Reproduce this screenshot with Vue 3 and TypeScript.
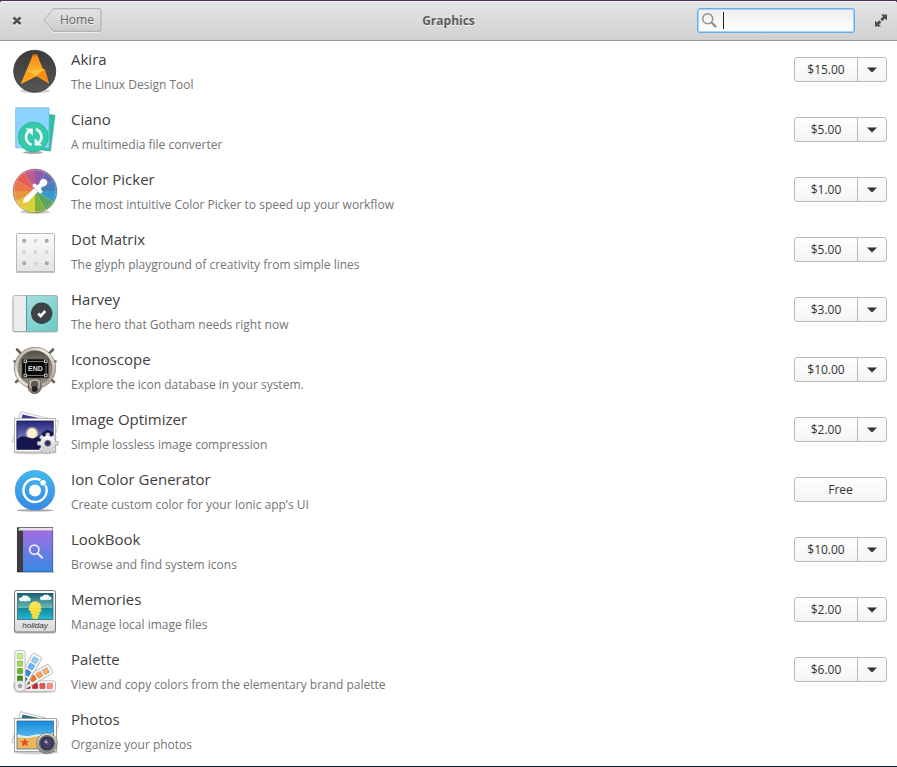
<script setup lang="ts">
import { ref } from 'vue'

interface AppEntry {
  id: string
  name: string
  summary: string
  price?: string
}

interface Swatch {
  angle: number
  colors: string[]
}

const query = ref('')

const apps: AppEntry[] = [
  { id: 'akira', name: 'Akira', summary: 'The Linux Design Tool', price: '$15.00' },
  { id: 'ciano', name: 'Ciano', summary: 'A multimedia file converter', price: '$5.00' },
  { id: 'picker', name: 'Color Picker', summary: 'The most intuitive Color Picker to speed up your workflow', price: '$1.00' },
  { id: 'dots', name: 'Dot Matrix', summary: 'The glyph playground of creativity from simple lines', price: '$5.00' },
  { id: 'harvey', name: 'Harvey', summary: 'The hero that Gotham needs right now', price: '$3.00' },
  { id: 'iconoscope', name: 'Iconoscope', summary: 'Explore the icon database in your system.', price: '$10.00' },
  { id: 'optimizer', name: 'Image Optimizer', summary: 'Simple lossless image compression', price: '$2.00' },
  { id: 'ion', name: 'Ion Color Generator', summary: 'Create custom color for your Ionic app’s UI', price: 'Free' },
  { id: 'lookbook', name: 'LookBook', summary: 'Browse and find system icons', price: '$10.00' },
  { id: 'memories', name: 'Memories', summary: 'Manage local image files', price: '$2.00' },
  { id: 'palette', name: 'Palette', summary: 'View and copy colors from the elementary brand palette', price: '$6.00' },
  { id: 'photos', name: 'Photos', summary: 'Organize your photos' },
]

const wheelColors = [
  '#8d5cab', '#6568ae', '#4a7fbd', '#3899cd', '#57a562', '#7fb03f',
  '#d2d334', '#e6c93a', '#e8963f', '#e87848', '#e65c50', '#bd5b8c',
]

// Pie slice of the colour wheel, clockwise from twelve o'clock.
function slice(index: number): string {
  const point = (n: number): string => {
    const a = (n * Math.PI) / 6
    return `${(24 + 22 * Math.sin(a)).toFixed(2)} ${(24 - 22 * Math.cos(a)).toFixed(2)}`
  }
  return `M24 24L${point(index)}A22 22 0 0 1 ${point(index + 1)}Z`
}

const fans: Swatch[] = [
  { angle: 90, colors: ['#ff8c82', '#ed5353', '#c6262e', '#a10705'] },
  { angle: 60, colors: ['#ffb06e', '#ffa154', '#f37329', '#cc3b02'] },
  { angle: 30, colors: ['#8cd5ff', '#64baff', '#3689e6', '#0d52bf'] },
  { angle: 0, colors: ['#c5f57b', '#9bdb4d', '#68b723', '#3a9104'] },
]
</script>

<template>
  <div class="window">
    <header class="header">
      <div class="header-start">
        <button class="icon-button" type="button" aria-label="Close">
          <svg width="18" height="16" viewBox="0 0 18 16">
            <path d="M5.500 5l7 6.500M12.500 5l-7 6.500" stroke="#fff" stroke-opacity=".6" stroke-width="2.400" transform="translate(0 1)" />
            <path d="M5.500 4.500l7 6.500M12.500 4.500l-7 6.500" stroke="#4f4f4f" stroke-width="2.400" />
          </svg>
        </button>
        <button class="back" type="button">
          <svg class="back-shape" viewBox="0 0 60 25" aria-hidden="true">
            <defs>
              <linearGradient id="back-fill" x2="0" y2="1">
                <stop stop-color="#e4e4e4" /><stop offset="1" stop-color="#cbcbcb" />
              </linearGradient>
            </defs>
            <path d="M10 1.500L1 12.500L10 24.500H57" fill="none" stroke="#f1f1f1" />
            <path d="M10.500 .5H57a2 2 0 0 1 2 2V21.500a2 2 0 0 1-2 2H10.500L1 12.200z" fill="url(#back-fill)" stroke="#a8a8a8" />
          </svg>
          <span class="back-label">Home</span>
        </button>
      </div>
      <h1 class="heading">Graphics</h1>
      <div class="header-end">
        <label class="search">
          <svg width="16" height="16" viewBox="0 0 16 16" fill="none" stroke="#8f8f8f" aria-hidden="true">
            <circle cx="5.700" cy="5.700" r="5" stroke-width="1.400" />
            <path d="M9.500 9.500l4.600 4.600" stroke-width="2.200" />
          </svg>
          <span v-if="!query" class="caret"></span>
          <input v-model="query" type="text" aria-label="Search" :class="{ blank: !query }" />
        </label>
        <button class="icon-button" type="button" aria-label="Maximize">
          <svg width="16" height="16" viewBox="0 0 16 16" fill="#4f4f4f">
            <path d="M8 1.500h6v6l-2-2-2.700 2.700-2-2L10 3.500zM2 7.500l2 2 2.300-2.300 2 2L6 11.500l2 2H2z" />
          </svg>
        </button>
      </div>
    </header>

    <main>
      <ul class="list">
        <li v-for="app in apps" :key="app.id" class="row">
          <svg class="icon" viewBox="0 0 48 48" aria-hidden="true">
            <g v-if="app.id === 'akira'">
              <defs>
                <linearGradient id="ak-bg" x2="0" y2="1"><stop stop-color="#3b3b3b" /><stop offset="1" stop-color="#565656" /></linearGradient>
                <linearGradient id="ak-a" x2="0" y2="1"><stop stop-color="#f48a12" /><stop offset=".7" stop-color="#ffb92e" /><stop offset="1" stop-color="#ef8410" /></linearGradient>
              </defs>
              <ellipse cx="24" cy="44" rx="15" ry="2" fill="#000" opacity=".18" />
              <circle cx="23.700" cy="24.200" r="21" fill="url(#ak-bg)" stroke="#333" stroke-width=".8" />
              <path d="M22 7.500h4L38 36.500L25.500 29L10 36.800z" fill="url(#ak-a)" />
              <path d="M16 23.500L34 22L25.500 29L10 36.800z" fill="#ffc53a" />
              <path d="M16 23.500L25.500 29L10 36.800z" fill="#ff9f1d" />
              <path d="M29 25.500L34 22L38 36.500L25.500 29z" fill="#f78c12" />
              <path d="M22 7.500h4l-2 2.500z" fill="#c8650a" />
            </g>

            <g v-else-if="app.id === 'ciano'">
              <ellipse cx="22" cy="45.500" rx="10" ry="1.500" fill="#000" opacity=".35" />
              <path d="M34 7l10 1.200L39.500 44L14 41z" fill="#31bfa0" stroke="#2aa78c" stroke-width=".6" />
              <path d="M4.700.8H38v40H4.700z" fill="#8cd3ff" stroke="#70bdf0" stroke-width=".8" />
              <circle cx="22.300" cy="30" r="15" fill="#35c8a9" stroke="#2bb596" stroke-width=".8" />
              <g fill="none" stroke="#f4fffc" stroke-width="2.600">
                <path d="M20.500 38Q15.200 35.500 15 30Q15 26.500 18 24" />
                <path d="M25 22Q30.300 24.500 30.500 30Q30.500 33.500 27.500 36" />
              </g>
              <path d="M14.500 21.500h7.300v7.300zM31 38.500h-7.300v-7.300z" fill="#f4fffc" />
            </g>

            <g v-else-if="app.id === 'picker'">
              <ellipse cx="24" cy="45" rx="15" ry="1.800" fill="#000" opacity=".2" />
              <path v-for="(color, i) in wheelColors" :key="i" :d="slice(i)" :fill="color" />
              <circle cx="24" cy="24" r="21.900" fill="none" stroke="#5a4030" stroke-opacity=".4" />
              <circle cx="24" cy="24" r="20.900" fill="none" stroke="#fff" stroke-opacity=".25" />
              <g fill="#fff" transform="translate(12.300 35.700) rotate(45)">
                <path d="M-.5 0L-2.600-4V-18H2.600V-4L.5 0z" />
                <rect x="-6.200" y="-22" width="12.400" height="3.800" rx="1.900" />
                <path d="M-3.300-20L-2-24.500Q-4-27-3.600-29.500a3.700 3.700 0 0 1 7.200 0Q4-27 2-24.500L3.300-20z" />
              </g>
            </g>

            <g v-else-if="app.id === 'dots'">
              <defs><linearGradient id="dm" x2="0" y2="1"><stop stop-color="#fafafa" /><stop offset="1" stop-color="#e4e4e4" /></linearGradient></defs>
              <rect x="5" y="8" width="39" height="38" rx="1.500" fill="#000" opacity=".25" />
              <rect x="5.500" y="6.500" width="38" height="38" rx="1" fill="url(#dm)" stroke="#b8b8b8" />
              <g fill="#d3d3d3"><circle cx="24.500" cy="13.700" r="1.900" /><circle cx="13.200" cy="25" r="1.900" /><circle cx="24.500" cy="25" r="1.900" /><circle cx="35.700" cy="25" r="1.900" /><circle cx="24.500" cy="36.300" r="1.900" /></g>
              <g fill="#a6a6a6"><circle cx="13.200" cy="13.700" r="2" /><circle cx="35.700" cy="13.700" r="2" /><circle cx="13.200" cy="36.300" r="2" /><circle cx="35.700" cy="36.300" r="2" /></g>
            </g>

            <g v-else-if="app.id === 'harvey'">
              <defs><linearGradient id="hv" x2=".6" y2="1"><stop stop-color="#a6dedd" /><stop offset="1" stop-color="#72cdca" /></linearGradient></defs>
              <rect x="1.500" y="10" width="45.500" height="35.500" rx="2" fill="#000" opacity=".25" />
              <rect x="2" y="8.500" width="44.500" height="36" rx="1.500" fill="#ececec" />
              <path d="M15.300 8.500H45a1.500 1.500 0 0 1 1.500 1.500V43a1.500 1.500 0 0 1-1.500 1.500H15.300z" fill="url(#hv)" />
              <path d="M15.500 8.500v36" stroke="#3ba5a0" />
              <rect x="2" y="8.500" width="44.500" height="36" rx="1.500" fill="none" stroke="#8a9696" stroke-opacity=".6" />
              <circle cx="30.700" cy="26.300" r="10.700" fill="#3b4344" />
              <path d="M27.200 26.500l2.500 2.500 4.600-5" fill="none" stroke="#fff" stroke-width="2.600" />
            </g>

            <g v-else-if="app.id === 'iconoscope'">
              <defs>
                <linearGradient id="ic" x2="0" y2="1"><stop stop-color="#4b4641" /><stop offset=".45" stop-color="#8d877f" /><stop offset="1" stop-color="#8a847b" /></linearGradient>
                <linearGradient id="ic-rim" x2="1" y2="1"><stop stop-color="#9a948b" /><stop offset=".35" stop-color="#f1ede6" /><stop offset=".7" stop-color="#d5cfc5" /><stop offset="1" stop-color="#8a847c" /></linearGradient>
              </defs>
              <g stroke="#6b6157" stroke-width="2.600" stroke-linecap="round">
                <path d="M6 2.500l5 5M42 2.500l-5 5M3.500 14.500h4M44.500 14.500h-4M5 35l4-3.500M43 35l-4-3.500" />
              </g>
              <circle cx="24" cy="21" r="19" fill="url(#ic)" stroke="url(#ic-rim)" stroke-width="3" />
              <circle cx="24" cy="21" r="20.700" fill="none" stroke="#7a7168" stroke-width=".7" />
              <rect x="11" y="12" width="26.500" height="19" rx="1" fill="#080808" stroke="#55504a" stroke-width=".8" />
              <path d="M14 14.500h21.500M14 28.500h21.500M14.500 14v15M35 14v15" stroke="#999" stroke-width=".8" />
              <g fill="#111" stroke="#ddd" stroke-width=".8"><rect x="13" y="13" width="2.600" height="2.600" /><rect x="33.500" y="13" width="2.600" height="2.600" /><rect x="13" y="27.200" width="2.600" height="2.600" /><rect x="33.500" y="27.200" width="2.600" height="2.600" /></g>
              <text class="mark-end" x="24.500" y="24">END</text>
              <circle cx="23.700" cy="40" r="6.500" fill="#8b847b" stroke="#5a534c" />
              <path d="M17.500 33.500q6.200-3.500 12.400 0l-1 3.500H18.500z" fill="#aca59a" stroke="#6b645c" stroke-width=".6" />
              <circle cx="23.700" cy="37.500" r="4.500" fill="#605a53" stroke="#d5cec2" stroke-width="1.200" />
              <circle cx="23.700" cy="42" r="3" fill="#24211e" />
            </g>

            <g v-else-if="app.id === 'optimizer'">
              <defs>
                <linearGradient id="op-sky" x2="0" y2="1"><stop stop-color="#25247a" /><stop offset=".65" stop-color="#777dc2" /><stop offset="1" stop-color="#aaa6d2" /></linearGradient>
                <radialGradient id="op-moon"><stop stop-color="#fff9dd" /><stop offset=".6" stop-color="#fff3c5" /><stop offset="1" stop-color="#fff3c5" stop-opacity="0" /></radialGradient>
                <linearGradient id="op-gear" x2="0" y2="1"><stop stop-color="#fff" /><stop offset="1" stop-color="#c7cbd0" /></linearGradient>
              </defs>
              <ellipse cx="24" cy="45.500" rx="22" ry="1.800" fill="#000" opacity=".2" />
              <path d="M9.500 4.500L48 14L40.500 44L1 35z" fill="#f6f6f6" stroke="#b8b8b8" stroke-width=".7" />
              <path d="M11.500 7.500L30 11.500H10.500z" fill="#3b3d8b" />
              <rect x="3.500" y="11.500" width="41" height="33.500" fill="#fbfbfb" stroke="#a5a5a5" stroke-width=".8" />
              <rect x="5.900" y="14" width="36.300" height="28.300" fill="url(#op-sky)" />
              <circle cx="21" cy="26.300" r="7" fill="url(#op-moon)" />
              <path d="M5.900 32.500Q10 28 14 29.500T22 31.500Q29 29 33 24.500Q37 21 42.200 25.500V42.300H5.900z" fill="#14164c" />
              <rect x="5.900" y="14" width="36.300" height="28.300" fill="none" stroke="#17194d" stroke-width=".8" />
              <g transform="translate(36.700 36.300)">
                <g fill="#dfe1e4" stroke="#8d9198" stroke-width=".7">
                  <rect v-for="i in 8" :key="i" x="-1.900" y="-10.400" width="3.800" height="6" rx="1" :transform="`rotate(${i * 45})`" />
                </g>
                <circle r="7.600" fill="url(#op-gear)" />
                <circle r="3" fill="#2b2e67" stroke="#7c818a" stroke-width=".9" />
              </g>
            </g>

            <g v-else-if="app.id === 'ion'">
              <defs><linearGradient id="io" x2="0" y2="1"><stop stop-color="#42b9ec" /><stop offset="1" stop-color="#3788e8" /></linearGradient></defs>
              <ellipse cx="24" cy="43.300" rx="19" ry="1.200" fill="#000" opacity=".35" />
              <circle cx="24" cy="23.300" r="19.800" fill="url(#io)" stroke="#358ac8" stroke-width=".6" />
              <path d="M29.500 13.100A11.600 11.600 0 1 0 34.600 18.500" fill="none" stroke="#fff" stroke-width="2.400" />
              <circle cx="24" cy="23.500" r="6" fill="#fff" />
              <circle cx="32.100" cy="15.700" r="2.800" fill="#fff" />
            </g>

            <g v-else-if="app.id === 'lookbook'">
              <defs><linearGradient id="lb" x2="0" y2="1"><stop stop-color="#a56de2" /><stop offset="1" stop-color="#3689e6" /></linearGradient></defs>
              <rect x="6" y="44" width="37" height="1.800" fill="#000" opacity=".25" />
              <rect x="6" y=".5" width="36" height="44.500" rx=".5" fill="#3d3d3d" />
              <path d="M8.500 1H42v2.500H7z" fill="#e6e4ea" />
              <rect x="12" y="3" width="30" height="42" fill="url(#lb)" />
              <path d="M12 3.500h30" stroke="#bc97df" />
              <rect x="6.300" y=".5" width="35.500" height="44.300" fill="none" stroke="#302b4d" stroke-opacity=".55" stroke-width=".7" />
              <circle cx="23.300" cy="22.700" r="4.600" fill="none" stroke="#f2ecff" stroke-width="1.700" />
              <path d="M26.700 26.200l5 5" stroke="#f2ecff" stroke-width="2" />
            </g>

            <g v-else-if="app.id === 'memories'">
              <defs>
                <linearGradient id="me-sky" x2="0" y2="1"><stop stop-color="#175d78" /><stop offset="1" stop-color="#6fc3b9" /></linearGradient>
                <linearGradient id="me-sea" x2="0" y2="1"><stop stop-color="#14879e" /><stop offset="1" stop-color="#22bbd5" /></linearGradient>
                <linearGradient id="me-card" x2="0" y2="1"><stop stop-color="#fdfdfd" /><stop offset="1" stop-color="#dcdcdc" /></linearGradient>
              </defs>
              <rect x="3" y="4.500" width="42" height="42" rx="2" fill="#000" opacity=".25" />
              <rect x="3.500" y="3.500" width="41" height="41.500" rx="2" fill="url(#me-card)" stroke="#777" />
              <rect x="6.500" y="6" width="35.500" height="16" fill="url(#me-sky)" />
              <rect x="6.500" y="21" width="35.500" height="11.500" fill="url(#me-sea)" />
              <path d="M18 21a6.200 6.700 0 0 1 12.400 0z" fill="#fbe454" />
              <path d="M18 20.800h12.400l-.8 1.700 1.500 1.500-3 1.200 1 2-2 1 1 1.300-1.500.5v2.500h-5V30l-1.500-1 1.500-1.500-2.500-1.500 1-1.200-2.500-1.500z" fill="#f3dc44" />
              <path d="M8 13q0-3 3-2.700 1-3 3.500-1.500 2.500-1 3 1.500 2.500.2 2 3-1.500 1.700-3 .5-2 1.500-3.500.2-3.500 1.200-5-1zM29 12q0-3 3-2.700 1-2.500 3-1.300 2.500-1.200 3 1.300 2.500 0 2.500 2.500-1.500 2-3.500.7-1.500 1.500-3.500.2-3 1.300-4.500-.7z" fill="#f1fbfc" />
              <rect x="6.500" y="6.500" width="35.500" height="26" fill="none" stroke="#2c5b66" stroke-width=".7" />
              <text class="mark-holiday" x="24" y="41">holiday</text>
            </g>

            <g v-else-if="app.id === 'palette'">
              <ellipse cx="24" cy="44.800" rx="21" ry="1.300" fill="#000" opacity=".2" />
              <g v-for="fan in fans" :key="fan.angle" :transform="`rotate(${fan.angle} 9 39)`">
                <rect x="3.800" y="3.500" width="10.400" height="40.500" rx="2" fill="#f8f8f8" stroke="#b0b0b0" stroke-width=".8" />
                <rect v-for="(color, i) in fan.colors" :key="color" x="6.300" :y="6.500 + i * 7.400" width="5.400" height="5.400" rx=".6" :fill="color" stroke="#000" stroke-opacity=".25" stroke-width=".7" />
              </g>
              <circle cx="9" cy="39" r="5.200" fill="#f1f1f1" stroke="#bbb" stroke-width=".6" />
              <circle cx="9" cy="39" r="2" fill="#a7a7a7" stroke="#898989" stroke-width=".6" />
            </g>

            <g v-else>
              <defs>
                <linearGradient id="ph-sky" x2="0" y2="1"><stop stop-color="#168bdd" /><stop offset="1" stop-color="#89d8f8" /></linearGradient>
                <linearGradient id="ph-rim" x2="0" y2="1"><stop stop-color="#e6e6e6" /><stop offset="1" stop-color="#8a8a8a" /></linearGradient>
                <radialGradient id="ph-lens"><stop stop-color="#7560a8" /><stop offset=".5" stop-color="#31304f" /><stop offset="1" stop-color="#23252e" /></radialGradient>
              </defs>
              <ellipse cx="25" cy="45.500" rx="22" ry="1.700" fill="#000" opacity=".2" />
              <path d="M9.500 4.500L48 14.500L40.500 43L.8 35.500z" fill="#f6f6f6" stroke="#aaa" stroke-width=".7" />
              <path d="M11.500 7.500L30 11.500H10.500z" fill="#2f6b85" />
              <rect x="3.500" y="11.500" width="42" height="33" fill="#fbfbfb" stroke="#929292" stroke-width=".8" />
              <rect x="6" y="14" width="36.500" height="28" fill="url(#ph-sky)" />
              <path d="M6 27Q14 30 20 28.500T42.500 26V42H6z" fill="#d9f4f8" />
              <path d="M6 30Q15 32 22 30T42.500 30V42H6z" fill="#edb762" />
              <rect x="6" y="14" width="36.500" height="28" fill="none" stroke="#35637c" stroke-width=".7" />
              <path d="M14 31l1 3.200 3.500-.5-2.700 2.400 1.300 3.200-3.100-1.800-3.200 2 1-3.500-2.600-2.100h3.500z" fill="#e8472a" />
              <circle cx="36" cy="36.300" r="10.400" fill="url(#ph-rim)" stroke="#6b6b6b" stroke-width=".7" />
              <circle cx="36" cy="36.300" r="8.200" fill="#5d6068" />
              <circle cx="36" cy="36.300" r="7" fill="url(#ph-lens)" stroke="#8c8f96" stroke-width=".6" />
              <circle cx="36" cy="36.300" r="4.400" fill="none" stroke="#6a6c86" stroke-width=".8" />
              <circle cx="35" cy="34.800" r="1.500" fill="#b29be0" />
            </g>
          </svg>

          <div class="text">
            <h2 class="name">{{ app.name }}</h2>
            <p class="summary">{{ app.summary }}</p>
          </div>

          <div v-if="app.price" class="actions">
            <button class="buy" type="button">{{ app.price }}</button>
            <button v-if="app.price !== 'Free'" class="more" type="button" :aria-label="`More options for ${app.name}`">
              <svg width="10" height="6" viewBox="0 0 10 6" aria-hidden="true"><path d="M0 .5h10L5 5.500z" fill="#333" /></svg>
            </button>
          </div>
        </li>
      </ul>
    </main>
  </div>
</template>

<style>
body {
  background: #4b3457;
}
</style>

<style scoped>
.window {
  display: flex;
  flex-direction: column;
  box-sizing: border-box;
  min-height: 100vh;
  border-top: 1px solid #4b3457;
  border-bottom: 1px solid #0d1a29;
  color: #333;
  font-family: "Open Sans", "Noto Sans", sans-serif;
  font-size: 12px;
}

button,
input {
  font: inherit;
  color: inherit;
}

.header {
  display: grid;
  grid-template-columns: 1fr auto 1fr;
  align-items: center;
  box-sizing: border-box;
  height: 40px;
  padding: 0 8px;
  border-bottom: 1px solid #969696;
  border-radius: 3px 3px 0 0;
  background: linear-gradient(#e6e6e6, #d0d0d0);
  box-shadow: inset 0 1px #f4f4f4;
}

.header-start,
.header-end {
  display: flex;
  align-items: center;
}

.header-start {
  gap: 17px;
}

.header-end {
  justify-content: flex-end;
  gap: 18px;
}

.icon-button {
  display: flex;
  padding: 0;
  border: 0;
  background: none;
}

.heading {
  margin: 0;
  color: #5c5c5c;
  font-size: 12px;
  font-weight: 700;
  line-height: 20px;
  text-shadow: 0 1px #f2f2f2;
}

.back {
  position: relative;
  height: 25px;
  padding: 0 8px 2px 17px;
  border: 0;
  background: none;
  color: #666;
  text-shadow: 0 1px #f0f0f0;
}

.back-shape {
  position: absolute;
  inset: 0;
  width: 100%;
  height: 100%;
}

.back-label {
  position: relative;
}

.search {
  display: flex;
  align-items: center;
  box-sizing: border-box;
  width: 158px;
  height: 25px;
  padding: 0 4px;
  border: 1px solid #64afeb;
  border-radius: 3px;
  background: linear-gradient(#eee, #fff);
  box-shadow: inset 0 0 0 1px #a9d3f5;
}

.search input {
  flex: 1;
  min-width: 0;
  padding: 0 4px;
  border: 0;
  outline: 0;
  background: none;
}

.search input.blank {
  caret-color: transparent;
}

.caret {
  width: 1px;
  height: 17px;
  margin-left: 5px;
  background: #222;
}

main {
  flex: 1;
  background: #fff;
}

.list {
  margin: 0;
  padding: 0;
  list-style: none;
}

.row {
  display: flex;
  align-items: flex-start;
  box-sizing: border-box;
  height: 60px;
  padding: 6px 10px 6px 11px;
}

.icon {
  flex: none;
  width: 48px;
  height: 48px;
}

.text {
  display: grid;
  flex: 1;
  gap: 2px;
  min-width: 0;
  padding: 0 12px;
}

.name,
.summary {
  margin: 0;
  line-height: 24px;
  white-space: nowrap;
  overflow: hidden;
  text-overflow: ellipsis;
}

.name {
  color: #404040;
  font-size: 15px;
  font-weight: 400;
}

.summary {
  color: #747474;
}

.actions {
  display: flex;
  flex: none;
  width: 93px;
  height: 25px;
  margin-top: 10px;
}

.buy,
.more {
  display: flex;
  align-items: center;
  justify-content: center;
  box-sizing: border-box;
  padding: 0;
  border: 1px solid #bababa;
  border-radius: 3px;
  background: linear-gradient(#fff, #f4f4f4);
}

.buy {
  flex: 1;
}

.more {
  width: 30px;
  margin-left: -1px;
  border-radius: 0 3px 3px 0;
}

.buy:not(:last-child) {
  border-radius: 3px 0 0 3px;
}

.mark-end {
  fill: #ddd;
  font-family: "Liberation Sans", sans-serif;
  font-size: 7px;
  font-weight: 700;
  text-anchor: middle;
}

.mark-holiday {
  fill: #333;
  font-family: "Liberation Sans", sans-serif;
  font-size: 8px;
  font-style: italic;
  text-anchor: middle;
}
</style>
